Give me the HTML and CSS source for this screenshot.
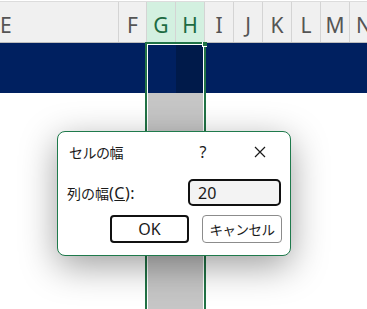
FILE: index.html
```html
<!DOCTYPE html>
<html lang="ja">
<head>
  <meta charset="UTF-8">
  <title>セルの幅</title>
  <link rel="stylesheet" href="styles.css">
</head>
<body>
  <div class="sheet">
    <div class="grid header">
      <div class="col col-e">E</div>
      <div class="col">F</div>
      <div class="col col-sel">G</div>
      <div class="col col-sel">H</div>
      <div class="col">I</div>
      <div class="col">J</div>
      <div class="col">K</div>
      <div class="col">L</div>
      <div class="col">M</div>
      <div class="col">N</div>
    </div>

    <div class="grid band">
      <div class="cell"></div>
      <div class="cell"></div>
      <div class="cell"></div>
      <div class="cell cell-shade"></div>
      <div class="cell"></div>
      <div class="cell"></div>
      <div class="cell"></div>
      <div class="cell"></div>
      <div class="cell"></div>
      <div class="cell"></div>
    </div>

    <div class="grid body">
      <div class="cell"></div>
      <div class="cell"></div>
      <div class="cell cell-gray"></div>
      <div class="cell cell-gray"></div>
      <div class="cell"></div>
      <div class="cell"></div>
      <div class="cell"></div>
      <div class="cell"></div>
      <div class="cell"></div>
      <div class="cell"></div>
    </div>

    <!-- selected columns G:H -->
    <div class="selection">
      <div class="fill-handle"></div>
    </div>

    <div class="dialog">
      <div class="dialog-title">
        <span class="title-text">セルの幅</span>
        <span class="title-help">?</span>
        <span class="title-close">
          <svg width="12" height="12" viewBox="0 0 12 12">
            <path d="M1 1 L11 11 M11 1 L1 11" stroke="#1a1a1a" stroke-width="1.2" fill="none"/>
          </svg>
        </span>
      </div>
      <div class="dialog-row">
        <label class="field-label" for="col-width">列の幅<span class="latin">(<u>C</u>):</span></label>
        <input id="col-width" class="field-input" type="text" value="20">
      </div>
      <div class="dialog-buttons">
        <button class="btn btn-default">OK</button>
        <button class="btn">キャンセル</button>
      </div>
    </div>
  </div>
</body>
</html>
```

FILE: styles.css
```css
body {
  margin: 0;
  background: #fff;
  overflow: hidden;
}
.sheet {
  position: relative;
  width: 367px;
  height: 309px;
  padding-top: 1px;
  box-sizing: border-box;
  overflow: hidden;
}
.grid {
  display: grid;
  grid-template-columns: 119px 28px 29px 29px 29px 29px 29px 29px 29px 29px;
}
.header {
  background: #f0f0f0;
  border-top: 1px solid #dcdcdc;
  border-bottom: 1px solid #bdbdbd;
  box-sizing: border-box;
  height: 42px;
}
.col {
  display: flex;
  align-items: flex-end;
  justify-content: center;
  padding-bottom: 2px;
  border-right: 1px solid #d4d4d4;
  font-family: "Noto Sans", sans-serif;
  font-size: 21px;
  color: #555;
  line-height: 1.36;
}
.col-e {
  justify-content: flex-start;
}
.col-sel {
  background: #d3f0e0;
  color: #1d6b42;
}
.band {
  height: 50px;
  background: #002060;
}
.cell-shade {
  background: #001a4a;
}
.body {
  height: 216px;
}
.cell-gray {
  background: #c6c6c6;
}
.selection {
  position: absolute;
  left: 145px;
  top: 42px;
  width: 61px;
  bottom: -10px;
  border: 2px solid #217346;
  box-shadow: inset 0 0 0 1px #fff;
  box-sizing: border-box;
}
.fill-handle {
  position: absolute;
  top: -2px;
  right: -3px;
  width: 4px;
  height: 4px;
  background: #217346;
  border-left: 1px solid #fff;
  border-bottom: 1px solid #fff;
}
.dialog {
  position: absolute;
  left: 57px;
  top: 131px;
  width: 234px;
  height: 125px;
  box-sizing: border-box;
  background: #fff;
  border: 1px solid #1f7a4c;
  border-radius: 8px;
  box-shadow: 0 10px 36px rgba(0, 0, 0, 0.38);
  font-family: "Noto Sans", "Noto Sans CJK JP", sans-serif;
  font-size: 14px;
  color: #1a1a1a;
  z-index: 2;
}
.dialog-title {
  display: flex;
  align-items: center;
  height: 39px;
  padding-left: 11px;
}
.title-text {
  flex: 1;
  letter-spacing: -0.5px;
}
.title-help {
  width: 20px;
  text-align: center;
  font-size: 16px;
}
.title-close {
  display: flex;
  justify-content: center;
  width: 40px;
  margin-left: 27px;
  margin-right: 10px;
}
.dialog-row {
  display: flex;
  align-items: center;
  height: 27px;
  margin-top: 8px;
  padding: 0 9px 0 9px;
}
.field-label {
  flex: 1;
}
.latin {
  font-size: 16px;
  letter-spacing: 0.5px;
}
.field-input {
  width: 93px;
  height: 27px;
  box-sizing: border-box;
  border: 2px solid #111;
  border-radius: 5px;
  background: #f3f3f3;
  padding: 0 8px;
  font-family: "Noto Sans", sans-serif;
  font-size: 16px;
  color: #1a1a1a;
}
.dialog-buttons {
  display: flex;
  justify-content: flex-end;
  gap: 13px;
  margin-top: 9px;
  padding-right: 8px;
}
.btn {
  width: 80px;
  height: 28px;
  box-sizing: border-box;
  background: #fff;
  border: 1px solid #8c8c8c;
  border-radius: 4px;
  font-family: "Noto Sans", "Noto Sans CJK JP", sans-serif;
  font-size: 13.5px;
  letter-spacing: -0.5px;
  color: #1a1a1a;
  padding: 0;
}
.btn-default {
  width: 79px;
  border: 2px solid #111;
  font-size: 16px;
  letter-spacing: 0;
}
```
